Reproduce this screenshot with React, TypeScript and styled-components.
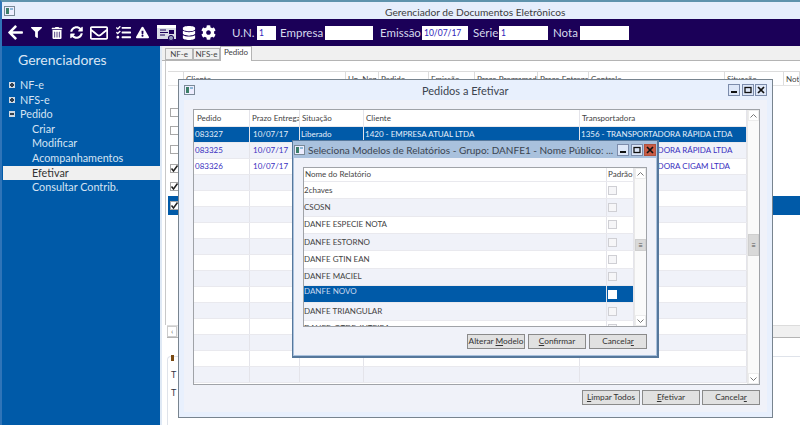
import React from "react";
import styled, { createGlobalStyle } from "styled-components";
import { FaArrowLeft, FaFilter, FaTrashAlt, FaSyncAlt, FaRegEnvelope, FaTasks, FaExclamationTriangle, FaDatabase, FaCog } from "react-icons/fa";

const FONT = `Lato, "Noto Sans", "Liberation Sans", sans-serif`;

const Global = createGlobalStyle`
  html, body { margin: 0; padding: 0; background: #fff; }
  body { width: 800px; height: 425px; overflow: hidden; font-family: ${FONT}; }
  * { box-sizing: border-box; }
  svg { flex: none; }
`;

const Screen = styled.div`
  position: relative; width: 800px; height: 425px; overflow: hidden;
  display: flex; flex-direction: column; background: #fff;
  border-top: 2px solid #5f93ad; border-left: 2px solid #2f74b8;
`;
const TitleBar = styled.div`
  height: 17px; flex: none; background: #e6eefc; display: flex; align-items: center; color: #3c3c3c;
  padding: 0 2px; font-size: 10.2px; position: relative;
`;
const MainTitle = styled.span`margin-left: 370px; position: relative; top: 1px;`;
const Toolbar = styled.div`
  height: 27px; flex: none; background: #1b0058; display: flex; align-items: center; color: #d6d9ec; font-size: 11.5px;
`;
const IconSlot = styled.span<{ $w: number; $gap: number }>`
  width: ${p => p.$w}px; margin-left: ${p => p.$gap}px; display: flex; justify-content: center; align-items: center; color: #fff; flex: none;
`;
const FieldLabel = styled.span<{ $w: number; $gap: number }>`width: ${p => p.$w}px; margin-left: ${p => p.$gap}px; white-space: nowrap; line-height: 14px; flex: none;`;
const FieldInput = styled.span<{ $w: number; $gap: number }>`
  width: ${p => p.$w}px; margin-left: ${p => p.$gap}px; height: 14px; background: #fff; color: #2a22b8; font-size: 8.5px;
  line-height: 14px; padding-left: 2px; flex: none; overflow: hidden;
`;
const Body = styled.div`flex: 1; display: flex; min-height: 0;`;
const Sidebar = styled.nav`
  width: 158px; flex: none; background: #005aa8; color: #d5e3f3; font-size: 10.8px; padding-top: 3px;
`;
const SideTitle = styled.div`font-size: 14px; line-height: 22px; margin: 0 0 7px 16px; color: #d9e6f5;`;
const TreeRow = styled.div<{ $active?: boolean; $child?: boolean }>`
  height: 14.6px; line-height: 14.6px; display: flex; align-items: center; margin-left: 1px; white-space: nowrap;
  padding-left: ${p => (p.$child ? 29 : 6)}px;
  background: ${p => (p.$active ? "#f0f0f0" : "transparent")};
  color: ${p => (p.$active ? "#333" : "inherit")};
`;
const Expander = styled.span`
  width: 6px; height: 6px; background: #cfd8e2; margin-right: 5px; position: relative; flex: none;
  &::after { content: ""; position: absolute; left: 1px; right: 1px; top: 2px; height: 2px; background: #333f4c; }
`;
const Plus = styled(Expander)`
  &::before { content: ""; position: absolute; top: 1px; bottom: 1px; left: 2px; width: 2px; background: #333f4c; }
`;
const Content = styled.main`flex: 1; min-width: 0; padding-left: 3px; display: flex; flex-direction: column; border-left: 2px solid #dfe9f5; font-size: 8px; color: #444;`;
const TabStrip = styled.div`
  height: 15px; flex: none; display: flex; align-items: flex-end; background: #f0f0f0; margin-left: -3px; padding-left: 3px; border-bottom: 1px solid #b4b4b4;
`;
const Tab = styled.div<{ $active?: boolean; $w: number }>`
  width: ${p => p.$w}px; height: ${p => (p.$active ? 15 : 12)}px; border: 1px solid #b4b4b4; ${p => p.$active && "border-bottom: none;"}
  background: ${p => (p.$active ? "#fff" : "#f0f0f0")}; text-align: center; font-size: 8px; line-height: 11px; color: #444;
  margin-bottom: ${p => (p.$active ? -1 : 0)}px; z-index: 1;
`;
const Panel = styled.div`
  height: 264px; flex: none; display: flex; flex-direction: column; padding: 10px 0 0 2px; border-left: 1px solid #c8c8c8; position: relative;
`;
const BgHead = styled.div`
  height: 15px; flex: none; display: grid; grid-template-columns: 16px 162px 33px 50px 46px 63px 51px 136px 59px 1fr; background: #fff; border-top: 1px solid #dcdcdc; border-bottom: 1px solid #e4e4e4;
`;
const BgHeadCell = styled.div`border-right: 1px solid #dcdcdc; padding: 0 2px; line-height: 14px; white-space: nowrap; overflow: hidden; font-size: 8px;`;
const BgRows = styled.div`padding-top: 17px; flex: 1; display: flex; flex-direction: column;`;
const BgRow = styled.div<{ $sel?: boolean }>`
  height: 18.6px; flex: none; background: ${p => (p.$sel ? "#005aa8" : "transparent")}; display: flex; align-items: center; padding-left: 2px;
`;
const Check = styled.span`
  width: 9px; height: 9px; border: 1px solid #a8a8a8; background: #fff; display: block; flex: none; position: relative; color: #222;
`;
const HScroll = styled.div`
  height: 11px; flex: none; margin-left: 2px; background: #f0f0f0; border-top: 1px solid #dcdcdc; display: flex;
  border-bottom: 1px solid #b4b4b4; box-sizing: content-box;
`;
const ArrowBox = styled.div`width: 10px; background: #fff; text-align: center; line-height: 9px; font-size: 8px; color: #666; border: 1px solid #ccc;`;
const Lower = styled.div`flex: 1; padding: 18px 0 0 2px; display: flex; flex-direction: column; color: #334;`;
const Fieldset = styled.div`flex: 1; border: 1px solid #dfe3ea; border-width: 1px 0 0 1px; border-top-left-radius: 4px; padding: 0 0 0 3px; display: flex; flex-direction: column;`;
const LegendMark = styled.div`width: 3px; height: 6px; background: #7a4a12; margin: -2px 0 5px;`;
const LowerLine = styled.div`font-size: 9px; line-height: 18px; color: #334;`;

const Win = styled.section<{ $x: number; $y: number; $w: number; $h: number }>`
  position: absolute; left: ${p => p.$x}px; top: ${p => p.$y}px; width: ${p => p.$w}px; height: ${p => p.$h}px; display: flex; flex-direction: column;
`;
const Win1 = styled(Win)`
  border: 1px solid #78848f; background: #e8f0fd; padding: 0 5px 5px;
`;
const Win2 = styled(Win)`
  border: 1px solid #56789c; border-width: 1px 2px 2px 1px; background: #a9c1dd; padding: 0 1px 1px;
`;
const WinHead = styled.header<{ $h: number }>`
  height: ${p => p.$h}px; flex: none; display: flex; align-items: center; color: #3b4450; white-space: nowrap; overflow: hidden;
`;
const HeadTitle = styled.span<{ $gap: number; $size: number }>`margin-left: ${p => p.$gap}px; font-size: ${p => p.$size}px; flex: 1; min-width: 0; overflow: hidden;`;
const WinBtn = styled.span<{ $red?: boolean }>`
  width: 12px; height: 12px; border: 1px solid ${p => (p.$red ? "#b0503c" : "#7c8cab")}; background: ${p => (p.$red ? "#c95c45" : "#dde7f8")};
  margin-left: 1.5px; display: flex; align-items: center; justify-content: center; flex: none; color: #111;
`;
const Win1Body = styled.div`flex: 1; min-height: 0; background: #f0f2f9; padding: 9px 7px 0 9px; display: flex; flex-direction: column;`;
const Win2Body = styled.div`flex: 1; min-height: 0; background: #f0f2f9; padding: 9px 9px 0 9px; display: flex; flex-direction: column;`;
const Table = styled.div<{ $h: number }>`
  height: ${p => p.$h}px; flex: none; display: flex; border: 1px solid #a0a3a8; background: #fff; overflow: hidden; font-size: 8px;
`;
const TableMain = styled.div`flex: 1; min-width: 0; overflow: hidden;`;
const GridRow = styled.div<{ $cols: string; $h: number; $bg?: string; $color?: string }>`
  display: grid; grid-template-columns: ${p => p.$cols}; height: ${p => p.$h}px; background: ${p => p.$bg ?? "#fff"}; color: ${p => p.$color ?? "#444"};
  border-bottom: 1px solid #e9e9ee;
`;
const Cell = styled.div<{ $pad?: number; $top?: boolean }>`
  padding-left: ${p => p.$pad ?? 2}px; border-right: 1px solid #e4e4ea; overflow: hidden; white-space: nowrap; display: flex;
  align-items: ${p => (p.$top ? "flex-start" : "center")}; line-height: 11px;
`;
const HeadText = styled.span`color: #444;`;
const BoxCell = styled(Cell)`padding-left: 1px;`;
const TinyBox = styled.span<{ $sel?: boolean }>`
  width: 9px; height: 9px; display: block; background: ${p => (p.$sel ? "#fff" : "#f6f6f8")}; border: 1px solid ${p => (p.$sel ? "#fff" : "#cfcfd4")};
`;
const VScroll = styled.div<{ $w: number }>`width: ${p => p.$w}px; flex: none; display: flex; flex-direction: column; background: #fff; border-left: 1px solid #e8e8e8;`;
const VArrow = styled.div`height: 11px; flex: none; display: flex; align-items: center; justify-content: center; color: #777; background: #fff; border: 1px solid #ececec;`;
const VTrack = styled.div`flex: 1; min-height: 0; background: #fafafa;`;
const VThumb = styled.div<{ $top: number; $h: number }>`
  margin-top: ${p => p.$top}px; height: ${p => p.$h}px; background: #d9d9d9; border: 1px solid #cfcfcf; color: #555; display: flex; align-items: center; justify-content: center; font-size: 8px;
`;
const Footer = styled.div<{ $pad: number; $gap: number }>`
  display: flex; justify-content: flex-end; gap: ${p => p.$gap}px; padding: ${p => p.$pad}px 0 0 0; flex: none;
`;
const Btn = styled.button`
  width: 58px; height: 15px; padding: 0; border: 1px solid #8a8a8a; background: #e1e1e1; color: #333; font: 8.3px ${FONT}; line-height: 13px; border-radius: 0; white-space: nowrap;
  & u { text-decoration: underline; }
`;
const AppIcon = () => (
  <svg width="11" height="10" viewBox="0 0 11 10"><rect x=".5" y=".5" width="10" height="9" fill="#eef" stroke="#7a8a98" /><rect x="2" y="2" width="3" height="6" fill="#3c7f68" /><rect x="6" y="2" width="3" height="2" fill="#8fb9d8" /></svg>
);
const DocIcon = () => (
  <svg width="19" height="16" viewBox="0 0 19 16"><rect x="0" y="0" width="19" height="14" fill="#d9dde6" /><rect x="0" y="0" width="19" height="3" fill="#fff" /><path d="M3 5h6M3 7.5h8M3 10h5" stroke="#1b0058" strokeWidth="1.2" /><rect x="12" y="5" width="5" height="4" fill="#1b0058" /><circle cx="14" cy="13" r="2.6" fill="#8f98b8" stroke="#1b0058" /></svg>
);
const Chevron = ({ down }: { down?: boolean }) => (
  <svg width="7" height="4" viewBox="0 0 7 4"><path d={down ? "M.5.5l3 3 3-3" : "M.5 3.5l3-3 3 3"} fill="none" stroke="#777" /></svg>
);
const Min = () => <svg width="8" height="8" viewBox="0 0 8 8"><rect x="1" y="5" width="6" height="2" fill="#111" /></svg>;
const Max = () => <svg width="8" height="8" viewBox="0 0 8 8"><rect x="1" y="1.5" width="6" height="5" fill="none" stroke="#111" strokeWidth="1.3" /></svg>;
const Close = () => <svg width="8" height="8" viewBox="0 0 8 8"><path d="M1 1l6 6M7 1L1 7" stroke="#111" strokeWidth="1.7" /></svg>;
const CheckMark = styled.svg`position: absolute; left: -1px; top: -1px;`;

const COLS1 = "56px 50px 64px 216px 1fr";
const COLS2 = "1fr 27px";
const BG_HEADS = ["", "Cliente", "Un. Neg", "Pedido", "Emissão", "Prazo Programado", "Prazo Entrega", "Controle", "Situação", "Nota"];
const ORDERS = [
  ["083327", "10/07/17", "Liberado", "1420 - EMPRESA ATUAL LTDA", "1356 - TRANSPORTADORA RÁPIDA LTDA"],
  ["083325", "10/07/17", "Liberado", "1420 - EMPRESA ATUAL LTDA", "1356 - TRANSPORTADORA RÁPIDA LTDA"],
  ["083326", "10/07/17", "Liberado", "1420 - EMPRESA ATUAL LTDA", "1356 - TRANSPORTADORA CIGAM LTDA"],
];
const REPORTS = ["2chaves", "CSOSN", "DANFE ESPECIE NOTA", "DANFE ESTORNO", "DANFE GTIN EAN", "DANFE MACIEL", "DANFE NOVO", "DANFE TRIANGULAR", "DANFE_QTDE_INTEIRA"];

export default function App() {
  return (
    <Screen>
      <Global />
      <TitleBar>
        <AppIcon />
        <MainTitle>Gerenciador de Documentos Eletrônicos</MainTitle>
      </TitleBar>
      <Toolbar>
        <IconSlot $w={18} $gap={4}><FaArrowLeft size={17} /></IconSlot>
        <IconSlot $w={11} $gap={7}><FaFilter size={11} /></IconSlot>
        <IconSlot $w={10} $gap={10}><FaTrashAlt size={12} /></IconSlot>
        <IconSlot $w={14} $gap={7}><FaSyncAlt size={13} /></IconSlot>
        <IconSlot $w={18} $gap={7}><FaRegEnvelope size={18} /></IconSlot>
        <IconSlot $w={17} $gap={7}><FaTasks size={15} /></IconSlot>
        <IconSlot $w={12} $gap={4}><FaExclamationTriangle size={13} /></IconSlot>
        <IconSlot $w={19} $gap={9}><DocIcon /></IconSlot>
        <IconSlot $w={14} $gap={6}><FaDatabase size={14} /></IconSlot>
        <IconSlot $w={14} $gap={5}><FaCog size={15} /></IconSlot>
        <FieldLabel $w={25} $gap={17}>U.N.</FieldLabel>
        <FieldInput $w={19} $gap={0}>1</FieldInput>
        <FieldLabel $w={45} $gap={4}>Empresa</FieldLabel>
        <FieldInput $w={48} $gap={0} />
        <FieldLabel $w={42} $gap={7}>Emissão</FieldLabel>
        <FieldInput $w={46} $gap={0}>10/07/17</FieldInput>
        <FieldLabel $w={26} $gap={5}>Série</FieldLabel>
        <FieldInput $w={49} $gap={0}>1</FieldInput>
        <FieldLabel $w={27} $gap={5}>Nota</FieldLabel>
        <FieldInput $w={49} $gap={0} />
      </Toolbar>
      <Body>
        <Sidebar>
          <SideTitle>Gerenciadores</SideTitle>
          <TreeRow><Plus />NF-e</TreeRow>
          <TreeRow><Plus />NFS-e</TreeRow>
          <TreeRow><Expander />Pedido</TreeRow>
          <TreeRow $child>Criar</TreeRow>
          <TreeRow $child>Modificar</TreeRow>
          <TreeRow $child>Acompanhamentos</TreeRow>
          <TreeRow $child $active>Efetivar</TreeRow>
          <TreeRow $child>Consultar Contrib.</TreeRow>
        </Sidebar>
        <Content>
          <TabStrip>
            <Tab $w={28}>NF-e</Tab>
            <Tab $w={27}>NFS-e</Tab>
            <Tab $w={32} $active>Pedido</Tab>
          </TabStrip>
          <Panel>
            <BgHead>
              {BG_HEADS.map((h, i) => <BgHeadCell key={i}>{h}</BgHeadCell>)}
            </BgHead>
            <BgRows>
              {[false, false, false, true, true, true].map((on, i) => (
                <BgRow key={i} $sel={i === 5}>
                  <Check>
                    {on && (
                      <CheckMark width="9" height="9" viewBox="0 0 9 9"><path d="M1.5 4.5l2 2.5 4-5.5" fill="none" stroke="#222" strokeWidth="1.5" /></CheckMark>
                    )}
                  </Check>
                </BgRow>
              ))}
            </BgRows>
          </Panel>
          <HScroll><ArrowBox>‹</ArrowBox></HScroll>
          <Lower>
            <Fieldset>
              <LegendMark />
              <LowerLine>T</LowerLine>
              <LowerLine>T</LowerLine>
            </Fieldset>
          </Lower>
        </Content>
      </Body>

      <Win1 $x={176} $y={77} $w={595} $h={339}>
        <WinHead $h={20}>
          <AppIcon />
          <HeadTitle $gap={227} $size={11}>Pedidos a Efetivar</HeadTitle>
          <WinBtn><Min /></WinBtn><WinBtn><Max /></WinBtn><WinBtn><Close /></WinBtn>
        </WinHead>
        <Win1Body>
          <Table $h={276}>
            <TableMain>
              <GridRow $cols={COLS1} $h={17}>
                <Cell $pad={3}><HeadText>Pedido</HeadText></Cell>
                <Cell><HeadText>Prazo Entrega</HeadText></Cell>
                <Cell><HeadText>Situação</HeadText></Cell>
                <Cell><HeadText>Cliente</HeadText></Cell>
                <Cell><HeadText>Transportadora</HeadText></Cell>
              </GridRow>
              {Array.from({ length: 16 }).map((_, i) => {
                const d = ORDERS[i];
                return (
                  <GridRow key={i} $cols={COLS1} $h={16}
                    $bg={i === 0 ? "#005aa8" : i % 2 ? "#f0f2f9" : "#fff"}
                    $color={i === 0 ? "#e4eefa" : "#3a2fc0"}>
                    {[0, 1, 2, 3, 4].map(c => <Cell key={c} $pad={c === 1 ? 3 : 1}>{d?.[c]}</Cell>)}
                  </GridRow>
                );
              })}
            </TableMain>
            <VScroll $w={12}>
              <VArrow><Chevron /></VArrow>
              <VTrack><VThumb $top={113} $h={22}>≡</VThumb></VTrack>
              <VArrow><Chevron down /></VArrow>
            </VScroll>
          </Table>
          <Footer $pad={5} $gap={2}>
            <Btn><u>L</u>impar Todos</Btn>
            <Btn><u>E</u>fetivar</Btn>
            <Btn>Cancela<u>r</u></Btn>
          </Footer>
        </Win1Body>
      </Win1>

      <Win2 $x={290} $y={138} $w={367} $h={218}>
        <WinHead $h={17}>
          <AppIcon />
          <HeadTitle $gap={3} $size={10}>Seleciona Modelos de Relatórios - Grupo: DANFE1 - Nome Público: ...</HeadTitle>
          <WinBtn><Min /></WinBtn><WinBtn><Max /></WinBtn><WinBtn $red><Close /></WinBtn>
        </WinHead>
        <Win2Body>
          <Table $h={160}>
            <TableMain>
              <GridRow $cols={COLS2} $h={14}>
                <Cell $pad={1}><HeadText>Nome do Relatório</HeadText></Cell>
                <Cell $pad={1}><HeadText>Padrão</HeadText></Cell>
              </GridRow>
              {REPORTS.map((r, i) => (
                <GridRow key={r} $cols={COLS2} $h={17.35}
                  $bg={i === 6 ? "#005aa8" : i % 2 ? "#f0f2f9" : "#fff"} $color={i === 6 ? "#c8d8ee" : "#444"}>
                  <Cell $top={i === 6} $pad={0}>{r}</Cell>
                  <BoxCell><TinyBox $sel={i === 6} /></BoxCell>
                </GridRow>
              ))}
            </TableMain>
            <VScroll $w={12}>
              <VArrow><Chevron /></VArrow>
              <VTrack><VThumb $top={60} $h={12}>≡</VThumb></VTrack>
              <VArrow><Chevron down /></VArrow>
            </VScroll>
          </Table>
          <Footer $pad={7} $gap={3}>
            <Btn>Alterar <u>M</u>odelo</Btn>
            <Btn><u>C</u>onfirmar</Btn>
            <Btn>Cancela<u>r</u></Btn>
          </Footer>
        </Win2Body>
      </Win2>
    </Screen>
  );
}
